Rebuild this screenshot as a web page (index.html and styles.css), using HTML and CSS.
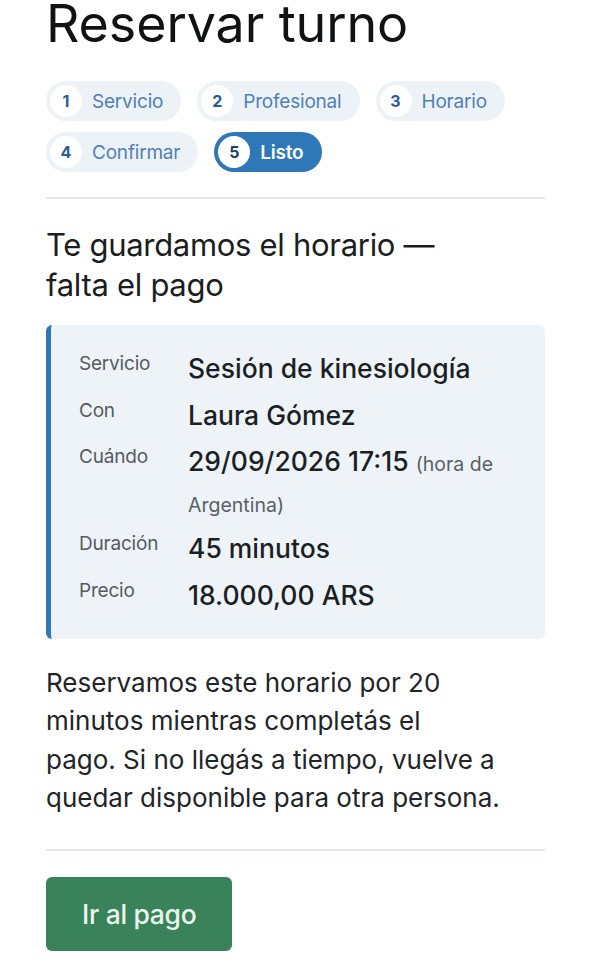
FILE: index.html
```html
<!DOCTYPE html>
<html lang="es">
<head>
<meta charset="utf-8">
<title>Reservar turno</title>
<link rel="stylesheet" href="styles.css">
</head>
<body>
<main class="page">
  <h1 class="title">Reservar turno</h1>
  <ol class="steps">
    <li class="step"><span class="step-num">1</span><span class="step-label">Servicio</span></li>
    <li class="step"><span class="step-num">2</span><span class="step-label">Profesional</span></li>
    <li class="step"><span class="step-num">3</span><span class="step-label">Horario</span></li>
    <li class="step"><span class="step-num">4</span><span class="step-label">Confirmar</span></li>
    <li class="step step-active"><span class="step-num">5</span><span class="step-label">Listo</span></li>
  </ol>
  <hr class="divider">
  <h2 class="subtitle">Te guardamos el horario —<br>falta el pago</h2>
  <dl class="summary">
    <dt>Servicio</dt><dd>Sesión de kinesiología</dd>
    <dt>Con</dt><dd>Laura Gómez</dd>
    <dt>Cuándo</dt><dd>29/09/2026 17:15 <span class="tz">(hora de Argentina)</span></dd>
    <dt>Duración</dt><dd>45 minutos</dd>
    <dt>Precio</dt><dd>18.000,00 ARS</dd>
  </dl>
  <p class="note">Reservamos este horario por 20 minutos mientras completás el<br>pago. Si no llegás a tiempo, vuelve a quedar disponible para otra persona.</p>
  <hr class="divider divider-bottom">
  <button class="pay" type="button">Ir al pago</button>
</main>
</body>
</html>
```
FILE: styles.css
```css
* { box-sizing: border-box; }
html, body { margin: 0; padding: 0; background: #ffffff; }
body {
  font-family: Inter, "Noto Sans", "Liberation Sans", sans-serif;
  color: #1d2024;
}
.page {
  padding: 0 46px;
}
.title {
  margin: 0;
  font-size: 52px;
  font-weight: 400;
  line-height: 48px;
  color: #111214;
  letter-spacing: -0.1px;
}
.steps {
  list-style: none;
  margin: 33px 0 0;
  padding: 0;
  display: flex;
  flex-wrap: wrap;
  gap: 11px 16px;
}
.step {
  display: flex;
  align-items: center;
  gap: 10px;
  height: 40px;
  padding: 4px 18px 4px 4px;
  border-radius: 20px;
  background: #edf2f7;
}
.step-num {
  width: 32px;
  height: 32px;
  border-radius: 50%;
  background: #ffffff;
  display: flex;
  align-items: center;
  justify-content: center;
  font-size: 16px;
  font-weight: 700;
  color: #2c5c8e;
}
.step-label {
  font-size: 19px;
  color: #5080b5;
  letter-spacing: -0.2px;
}
.step-active {
  background: #2e78b8;
}
.step-active .step-num { color: #1f3f63; }
.step-active .step-label {
  color: #ffffff;
  font-weight: 600;
}
.divider {
  margin: 25px 0 0;
  border: 0;
  height: 2px;
  background: #e6eaee;
}
.subtitle {
  margin: 26px 0 0;
  font-size: 31px;
  font-weight: 400;
  line-height: 40px;
  color: #1b1d20;
  letter-spacing: -0.3px;
}
.summary {
  margin: 20px 0 0;
  padding: 23px 28px 24px 28px;
  background: #eef3f8;
  border-left: 5px solid #3079b9;
  border-radius: 6px;
  display: grid;
  grid-template-columns: 81px 1fr;
  column-gap: 28px;
  row-gap: 6px;
}
.summary dt {
  font-size: 19px;
  line-height: 32px;
  color: #565b61;
  letter-spacing: -0.2px;
}
.summary dd {
  margin: 0;
  font-size: 26.5px;
  font-weight: 500;
  line-height: 40.5px;
  color: #1c1f23;
}
.tz {
  font-size: 19.5px;
  font-weight: 400;
  line-height: 1;
  color: #5a5f66;
}
.note {
  margin: 25px 0 0;
  max-width: 456px;
  font-size: 26px;
  line-height: 38.4px;
  color: #222428;
}
.divider-bottom {
  margin-top: 31px;
}
.pay {
  margin: 26px 0 0;
  height: 74px;
  padding: 0 36px;
  border: 0;
  border-radius: 6px;
  background: #3a8259;
  color: #eaf6ee;
  font-family: inherit;
  font-size: 26.5px;
  font-weight: 500;
  letter-spacing: -0.3px;
  cursor: pointer;
}
```
